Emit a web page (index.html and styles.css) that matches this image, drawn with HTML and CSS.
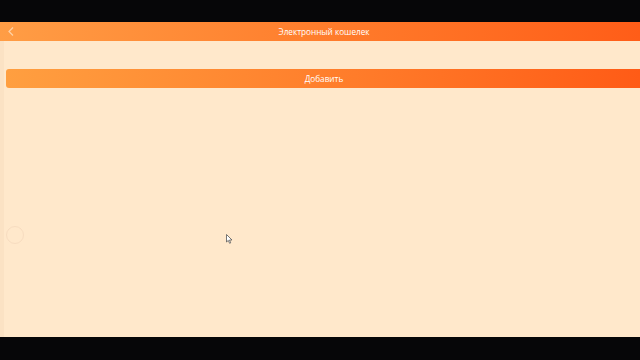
FILE: index.html
```html
<!DOCTYPE html>
<html lang="ru">
<head>
  <meta charset="UTF-8">
  <meta name="viewport" content="width=device-width, initial-scale=1.0">
  <title>Электронный кошелек</title>
  <link rel="stylesheet" href="styles.css">
</head>
<body>
  <div class="bar"></div>
  <div class="app">
    <header class="header">
      <span class="back">
        <svg width="6" height="9" viewBox="0 0 6 9"><polyline points="5,0.5 1,4.5 5,8.5" fill="none" stroke="#ffd3a8" stroke-width="1.2"/></svg>
      </span>
      <h1 class="title">Электронный кошелек</h1>
    </header>
    <main class="content">
      <button class="add">Добавить</button>
    </main>
    <!-- кнопка-призрак и курсор поверх экрана -->
    <span class="ghost"></span>
    <svg class="cursor" width="7" height="10" viewBox="0 0 7 10"><path d="M0.5 0.5 L0.5 8 L2.3 6.4 L3.6 9.3 L4.7 8.8 L3.5 6 L6 6 Z" fill="#fff" stroke="#555" stroke-width="0.8"/></svg>
  </div>
  <div class="bar bottom"></div>
</body>
</html>
```

FILE: styles.css
```css
html, body {
  margin: 0;
  height: 100%;
}
body {
  background: #060608;
  font-family: 'Open Sans', 'Noto Sans', sans-serif;
  display: flex;
  flex-direction: column;
}
.bar {
  height: 22px;
  flex: none;
}
.bar.bottom {
  flex: 1;
}
.app {
  position: relative;
  height: 315px;
  background: #ffe8cb;
  border-left: 4px solid #fbe2c4;
  display: flex;
  flex-direction: column;
}
.header {
  height: 19px;
  margin-left: -4px;
  background: linear-gradient(90deg, #ff9d45, #ff7a2a 55%, #ff5d18);
  display: flex;
  align-items: center;
  justify-content: center;
  position: relative;
}
.back {
  position: absolute;
  left: 8px;
  top: 5px;
  display: flex;
}
.title {
  margin: 0;
  font-size: 8.2px;
  font-weight: 400;
  color: #fff;
  padding-left: 8px;
}
.content {
  padding: 28px 0 0 2px;
}
.add {
  display: block;
  width: 100%;
  height: 19px;
  border: none;
  border-radius: 3px 0 0 3px;
  background: linear-gradient(90deg, #ff9f40, #ff7c2a 55%, #ff5b16);
  color: #fff;
  font-family: inherit;
  font-size: 8.2px;
  padding: 0 0 0 2px;
}
.ghost {
  position: absolute;
  left: 2px;
  top: 204px;
  width: 16px;
  height: 16px;
  border-radius: 50%;
  border: 1px solid #f7dcc0;
}
.cursor {
  position: absolute;
  left: 222px;
  top: 212px;
}
```
